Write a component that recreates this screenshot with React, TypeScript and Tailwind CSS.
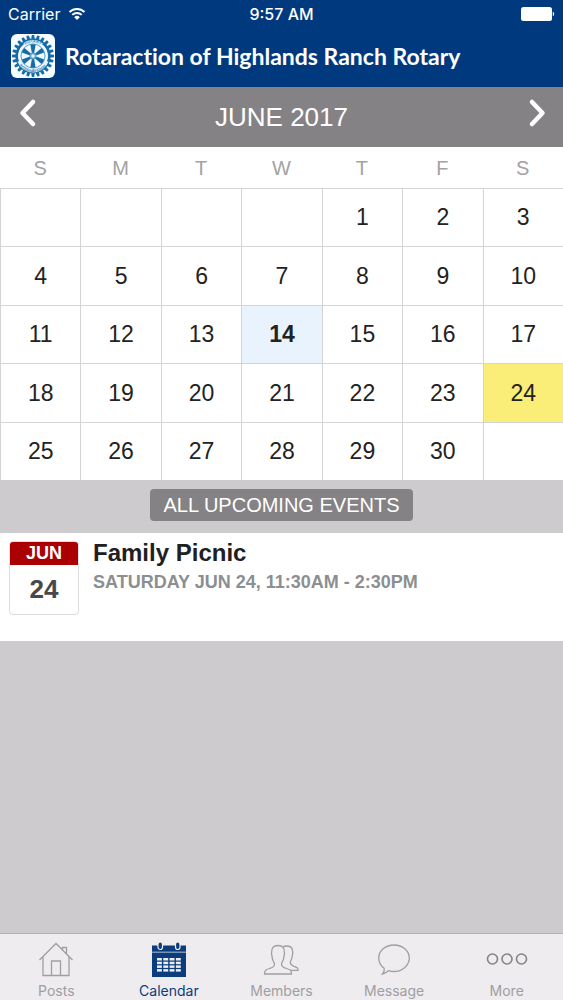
import React from "react";

const weekdays = ["S", "M", "T", "W", "T", "F", "S"];

const weeks: (number | null)[][] = [
  [null, null, null, null, 1, 2, 3],
  [4, 5, 6, 7, 8, 9, 10],
  [11, 12, 13, 14, 15, 16, 17],
  [18, 19, 20, 21, 22, 23, 24],
  [25, 26, 27, 28, 29, 30, null],
];

const today = 14;
const eventDay = 24;

function WheelLogo() {
  const teeth = Array.from({ length: 24 }, (_, i) => i * 15);
  const spokes = Array.from({ length: 6 }, (_, i) => i * 60);
  return (
    <svg viewBox="0 0 44 44" className="size-11 shrink-0 rounded-md bg-[#f7fcff]" aria-hidden="true">
      <g fill="#176ca8">
        {teeth.map((angle) => (
          <path key={angle} d="M20.2 5.5 20.8 1h2.4l.6 4.5z" transform={`rotate(${angle} 22 22)`} />
        ))}
      </g>
      <circle cx="22" cy="22" r="16.2" fill="none" stroke="#176ca8" strokeWidth="2.6" />
      <circle cx="22" cy="22" r="14.6" fill="#f0f9fe" />
      <path id="wheel-top" d="M8.5 22a13.5 13.5 0 0 1 27 0" fill="none" />
      <path id="wheel-bottom" d="M5.5 22a16.5 16.5 0 0 0 33 0" fill="none" />
      <path d="M13.5 11a14 14 0 0 1 17 0" fill="none" stroke="#e4f3fb" strokeWidth="4" />
      <path d="M8.4 27a14.5 14.5 0 0 0 27.2 0" fill="none" stroke="#e4f3fb" strokeWidth="4" />
      <g fill="#3d88bb" fontFamily="Liberation Sans, sans-serif" fontSize="4" fontWeight="700" textAnchor="middle">
        <text>
          <textPath href="#wheel-top" startOffset="50%">ROTARY</textPath>
        </text>
        <text>
          <textPath href="#wheel-bottom" startOffset="50%">INTERNATIONAL</textPath>
        </text>
      </g>
      <circle cx="22" cy="22" r="12" fill="none" stroke="#5b9fcb" strokeWidth="1" />
      <g fill="#176ca8">
        {spokes.map((angle) => (
          <path key={angle} d="M21 20 19.4 10.6q2.6-.8 5.2 0L23 20z" transform={`rotate(${angle} 22 22)`} />
        ))}
      </g>
      <circle cx="22" cy="22" r="3.4" fill="#5b9fcb" />
      <circle cx="22" cy="22" r="1.8" fill="#e4f3fb" />
    </svg>
  );
}

function StatusBar() {
  return (
    <div className="grid h-7 grid-cols-3 items-center px-2 text-base">
      <div className="flex items-center gap-2">
        <span>Carrier</span>
        <svg viewBox="0 0 18 14" className="h-3.5 w-[18px]" fill="none" stroke="white" strokeWidth="2">
          <path d="M1.5 5a10.6 10.6 0 0 1 15 0M4.3 7.9a6.7 6.7 0 0 1 9.4 0" />
          <path d="M9 13 6.2 10.2a4 4 0 0 1 5.6 0z" fill="white" stroke="none" />
        </svg>
      </div>
      <span className="text-center font-medium">9:57 AM</span>
      <svg viewBox="0 0 34 14" className="h-3.5 w-[34px] justify-self-end" fill="white">
        <rect width="31" height="14" rx="2.5" />
        <path d="M31.8 4.8c1.8.5 1.8 3.9 0 4.4z" />
      </svg>
    </div>
  );
}

function HouseIcon() {
  return (
    <svg viewBox="0 0 36 36" className="size-9" fill="none" stroke="currentColor" strokeWidth="1.3">
      <path d="M1.5 19 18 2.5 34.5 19M5 16v18.5h26V16M13.5 34.5V20h9v14.5M24.5 9V6.5h4V13" />
    </svg>
  );
}

function CalendarIcon() {
  const cells = [0, 1, 2, 3].flatMap((col) => [0, 1, 2, 3].map((row) => [col, row]));
  return (
    <svg viewBox="0 0 36 36" className="size-9" fill="currentColor">
      <path d="M1 4.5h34v6.3H1zM1 11.400h34V36H1z" />
      <g stroke="#eeecef" strokeWidth="1.2">
        <rect x="7" y="1" width="4.5" height="7.5" rx="2.2" />
        <rect x="24.5" y="1" width="4.5" height="7.5" rx="2.2" />
      </g>
      <g fill="#eeecef">
        {cells.map(([col, row]) => (
          <rect key={`${col}-${row}`} x={6 + col * 6.3} y={17 + row * 3.7} width="4.9" height="2.5" />
        ))}
      </g>
    </svg>
  );
}

function MembersIcon() {
  return (
    <svg viewBox="0 0 36 36" className="size-9" fill="none" stroke="currentColor" strokeWidth="1.3">
      <path d="M1.5 33c0-4 1.5-4.5 5-5.5 4-1.2 5-2 5-4.5 0-2-2.500-3-2.500-8 0-1-.8-1.500-.4-3C8.500 7 10 4.500 15 4.500S21.500 7 21.400 12c.4 1.500-.4 2-.4 3 0 5-2.500 6-2.500 8 0 2.500 1 3.300 5 4.500 3.500 1 5 1.500 5 5.500z" />
      <path d="M20 6c1.200-.8 2.500-1 4-1 4.500 0 5.800 2.500 5.700 6.500.4 1.500-.4 2-.4 3 0 4-2 5-2 7 0 2 1 2.800 3.700 3.800 3 1 4 1.500 4 4H27" />
    </svg>
  );
}

function MessageIcon() {
  return (
    <svg viewBox="0 0 36 36" className="size-9" fill="none" stroke="currentColor" strokeWidth="1.3">
      <path d="M18 4c8.500 0 15.300 5.800 15.300 13S26.500 30.500 18 30.500c-2 0-3.800-.3-5.500-.9-1.800 1.900-3.500 3-6 3.400 1.500-1.500 2-3.500 1.700-5.800C4.800 24.800 2.700 21 2.700 17 2.700 9.800 9.500 4 18 4z" />
    </svg>
  );
}

function MoreIcon() {
  return (
    <svg viewBox="0 0 42 36" className="h-9 w-[42px] text-[#858387]" fill="none" stroke="currentColor" strokeWidth="1.6">
      <circle cx="6.5" cy="18" r="5" />
      <circle cx="21" cy="18" r="5" />
      <circle cx="35.5" cy="18" r="5" />
    </svg>
  );
}

const tabs = [
  { label: "Posts", icon: <HouseIcon /> },
  { label: "Calendar", icon: <CalendarIcon />, active: true },
  { label: "Members", icon: <MembersIcon /> },
  { label: "Message", icon: <MessageIcon /> },
  { label: "More", icon: <MoreIcon /> },
];

function Month() {
  return (
    <table className="h-[333px] w-full table-fixed border-separate border-spacing-0 bg-white text-center text-[#222]">
      <thead>
        <tr className="h-[41px] text-xl text-[#a3a2a4]">
          {weekdays.map((day, index) => (
            <th key={index} className="p-0 font-normal">
              {day}
            </th>
          ))}
        </tr>
      </thead>
      <tbody className="text-[23px]">
        {weeks.map((week, index) => (
          <tr key={index}>
            {week.map((day, i) => (
              <td
                key={i}
                className={`border-t border-l border-[#d4d3d5] p-0 ${
                  day === today ? "bg-[#e8f3fe] font-bold" : day === eventDay ? "bg-[#faed78]" : ""
                }`}
              >
                {day}
              </td>
            ))}
          </tr>
        ))}
      </tbody>
    </table>
  );
}

export default function App() {
  return (
    <div className="flex min-h-screen flex-col bg-[#cecbcf] font-['Liberation_Sans',Arial,sans-serif]">
      <header className="bg-[#01397f] pb-[9px] font-[Inter,sans-serif] text-white">
        <StatusBar />
        <div className="flex items-center gap-2.5 px-[11px] pt-1.5">
          <WheelLogo />
          <h1 className="font-[Lato,sans-serif] text-[23px] leading-7 font-bold [font-variant-ligatures:none]">
            Rotaraction of Highlands Ranch Rotary
          </h1>
        </div>
      </header>

      <div className="flex h-[60px] items-center justify-between bg-[#848284] px-4 text-white">
        <button aria-label="Previous month" className="pb-2">
          <svg viewBox="0 0 24 30" className="h-[30px] w-6" fill="none" stroke="currentColor" strokeWidth="4.5" strokeLinecap="round" strokeLinejoin="round">
            <path d="M17 4 6.5 15 17 26" />
          </svg>
        </button>
        <h2 className="text-[26px]">JUNE 2017</h2>
        <button aria-label="Next month" className="pb-2">
          <svg viewBox="0 0 24 30" className="h-[30px] w-6" fill="none" stroke="currentColor" strokeWidth="4.5" strokeLinecap="round" strokeLinejoin="round">
            <path d="M9 4l10.5 11L9 26" />
          </svg>
        </button>
      </div>

      <Month />

      <div className="flex justify-center pt-[9px] pb-3">
        <button className="h-8 rounded-sm bg-[#848284] px-3.5 text-xl text-white">ALL UPCOMING EVENTS</button>
      </div>

      <article className="flex h-[108px] items-start gap-3 bg-white px-[9px] pt-2">
        <div className="w-[70px] overflow-hidden rounded-sm border border-[#dddcde] text-center font-bold">
          <div className="-mx-px -mt-px h-6 bg-[#ab0003] text-lg leading-6 text-white">JUN</div>
          <div className="h-[49px] text-[26px] leading-[49px] text-[#48484a]">24</div>
        </div>
        <div className="pl-0.5 font-bold">
          <h3 className="text-2xl leading-6 text-[#202022]">Family Picnic</h3>
          <p className="mt-[5px] text-lg leading-6 text-[#8b8f91]">SATURDAY JUN 24, 11:30AM - 2:30PM</p>
        </div>
      </article>

      <nav className="mt-auto grid h-[67px] grid-cols-5 border-t border-[#b3b1b5] bg-[#eeecef] font-[Inter,sans-serif]">
        {tabs.map((tab) => (
          <button
            key={tab.label}
            className={`flex flex-col items-center pt-[7px] text-sm ${
              tab.active ? "text-[#0b3d7d]" : "text-[#a09ea2]"
            }`}
          >
            {tab.icon}
            <span className="mt-1">{tab.label}</span>
          </button>
        ))}
      </nav>
    </div>
  );
}
